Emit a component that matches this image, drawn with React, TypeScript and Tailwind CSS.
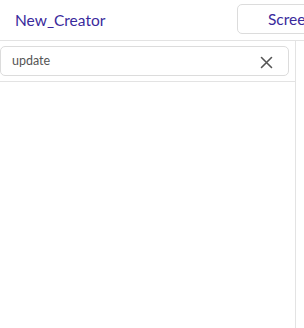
export default function App() {
  return (
    <div className="w-[304px] h-[328px] bg-white overflow-hidden flex flex-col" style={{ fontFamily: "Lato, 'Noto Sans', sans-serif" }}>
      <div className="h-[41px] flex items-center border-b border-[#e3e3e3] shrink-0 relative">
        <div className="pl-[15px] pt-[1px] text-[15.5px] text-[#3a2a9c] leading-none">New_Creator</div>
        <div className="absolute left-[237px] top-[4px] h-[30px] w-[120px] border border-[#dcdcdc] rounded-[5px] flex items-center pl-[30px] pt-[1px] text-[15.5px] text-[#3a2a9c] leading-none whitespace-nowrap">
          Screen
        </div>
      </div>
      <div className="flex flex-1">
        <div className="w-[296px] border-r border-[#e3e3e3] flex flex-col">
          <div className="pt-[5px] pr-[6px] pb-[5px]">
            <div className="h-[30px] border border-[#dcdcdc] rounded-[5px] flex items-center pl-[11px] pr-[15px]">
              <span className="flex-1 text-[12.5px] text-[#555]">update</span>
              <svg className="mt-[3px]" width="13" height="13" viewBox="0 0 13 13" fill="none" stroke="#555" strokeWidth="1.6" strokeLinecap="round">
                <path d="M1.5 1.5 L11.5 11.5 M11.5 1.5 L1.5 11.5" />
              </svg>
            </div>
          </div>
          <div className="border-b border-[#e3e3e3]" />
        </div>
        <div className="flex-1" />
      </div>
    </div>
  );
}
